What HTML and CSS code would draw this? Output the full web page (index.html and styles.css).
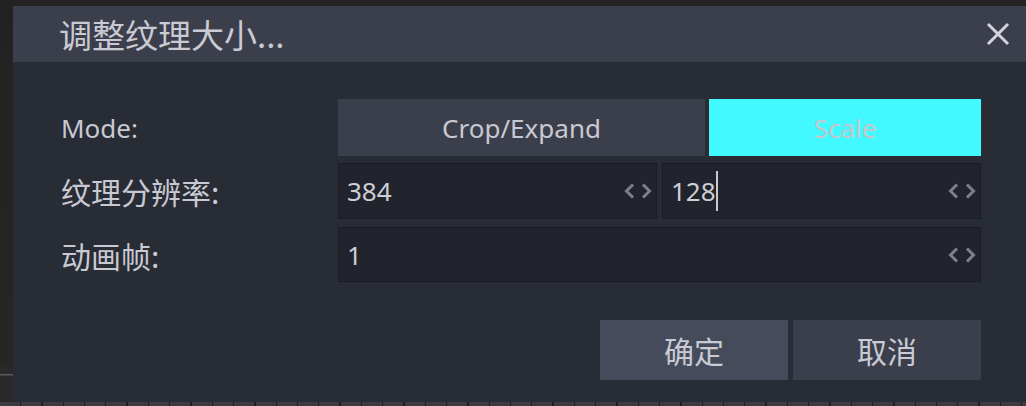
FILE: index.html
```html
<!DOCTYPE html>
<html lang="zh">
<head>
<meta charset="utf-8">
<title>调整纹理大小</title>
<link rel="stylesheet" href="styles.css">
</head>
<body>
<div class="screen">
  <div class="side"></div>
  <div class="main">
    <div class="dialog">
      <div class="titlebar">
        <span class="title">调整纹理大小...</span>
        <svg class="close" width="24" height="24" viewBox="0 0 24 24"><path d="M2 2 L22 22 M22 2 L2 22" stroke="#d3d3db" stroke-width="3" fill="none"/></svg>
      </div>
      <div class="body">
        <div class="form">
          <div class="label latin">Mode:</div>
          <div class="modes">
            <div class="mode">Crop/Expand</div>
            <div class="mode active">Scale</div>
          </div>
          <div class="label cjk">纹理分辨率:</div>
          <div class="pair">
            <div class="spin"><span class="val">384</span><svg class="arrows" width="28" height="16" viewBox="0 0 28 16"><path d="M9 1.5 L2.5 8 L9 14.5 M19 1.5 L25.5 8 L19 14.5" stroke="#7d808b" stroke-width="3" fill="none"/></svg></div>
            <div class="spin"><span class="val">128</span><span class="caret"></span><svg class="arrows" width="28" height="16" viewBox="0 0 28 16"><path d="M9 1.5 L2.5 8 L9 14.5 M19 1.5 L25.5 8 L19 14.5" stroke="#7d808b" stroke-width="3" fill="none"/></svg></div>
          </div>
          <div class="label cjk">动画帧:</div>
          <div class="spin"><span class="val">1</span><svg class="arrows" width="28" height="16" viewBox="0 0 28 16"><path d="M9 1.5 L2.5 8 L9 14.5 M19 1.5 L25.5 8 L19 14.5" stroke="#7d808b" stroke-width="3" fill="none"/></svg></div>
        </div>
        <div class="actions">
          <div class="btn ok">确定</div>
          <div class="btn">取消</div>
        </div>
      </div>
    </div>
  </div>
</div>
<div class="tiles"></div>
</body>
</html>
```
FILE: styles.css
```css
html, body {
  margin: 0;
  padding: 0;
  background: #232323;
  width: 1026px;
  height: 406px;
  overflow: hidden;
  font-family: "Noto Sans", "Noto Sans CJK SC", sans-serif;
  color: #cbccd4;
}
.screen {
  display: flex;
  height: 402px;
}
.side {
  width: 13px;
  flex: none;
  background: linear-gradient(to bottom, #222222 0, #262626 360px, #2b2b2b 374px, #5a5a5e 374px, #5a5a5e 375px, #29292b 376px);
}
.main {
  flex: 1;
  padding-top: 6px;
  display: flex;
}
.dialog {
  flex: 1;
  background: #282c35;
  display: flex;
  flex-direction: column;
}
.titlebar {
  height: 56px;
  flex: none;
  background: #3b3f4c;
  display: flex;
  align-items: center;
  padding-left: 46px;
  padding-right: 16px;
}
.title {
  flex: 1;
  font-size: 33px;
  color: #c9cad3;
  font-family: "Noto Sans CJK SC", "Noto Sans", sans-serif;
  line-height: 1;
}
.close {
  display: block;
}
.body {
  padding: 37px 45px 0 48px;
}
.form {
  display: grid;
  grid-template-columns: 277px 643px;
  grid-template-rows: 57px 56px 56px;
  row-gap: 7px;
}
.form > :nth-child(5), .form > :nth-child(6) {
  margin-top: 1px;
}
.label {
  display: flex;
  align-items: center;
  color: #c8c9d2;
}
.label.latin {
  font-size: 26px;
}
.label.cjk {
  font-size: 30px;
  font-family: "Noto Sans CJK SC", "Noto Sans", sans-serif;
}
.modes {
  display: grid;
  grid-template-columns: 367px 272px;
  column-gap: 4px;
}
.mode {
  background: #3b3f4c;
  display: flex;
  align-items: center;
  justify-content: center;
  font-size: 26px;
  color: #c8c9d2;
}
.mode.active {
  background: #41f9ff;
  color: #c4c8cb;
}
.pair {
  display: grid;
  grid-template-columns: 319px 319px;
  column-gap: 5px;
}
.spin {
  background: #21242c;
  border: 1px solid #1a1c22;
  display: flex;
  align-items: center;
  padding: 0 4px 0 8px;
  font-size: 26px;
  color: #cdced6;
}
.val {
  line-height: 1;
}
.caret {
  width: 2px;
  height: 40px;
  background: #c8c9d1;
  margin-left: 0;
}
.arrows {
  margin-left: auto;
  display: block;
}
.actions {
  display: flex;
  justify-content: flex-end;
  gap: 5px;
  margin-top: 38px;
}
.btn {
  width: 188px;
  height: 60px;
  background: #3b3f4c;
  display: flex;
  align-items: center;
  justify-content: center;
  font-size: 30px;
  font-family: "Noto Sans CJK SC", "Noto Sans", sans-serif;
  color: #c9cad3;
}
.btn.ok {
  background: #464b5c;
}
.tiles {
  height: 4px;
  background: repeating-linear-gradient(to right, #3c3c40 0, #3c3c40 20px, #1e1e20 20px, #1e1e20 21.3px);
}
```
